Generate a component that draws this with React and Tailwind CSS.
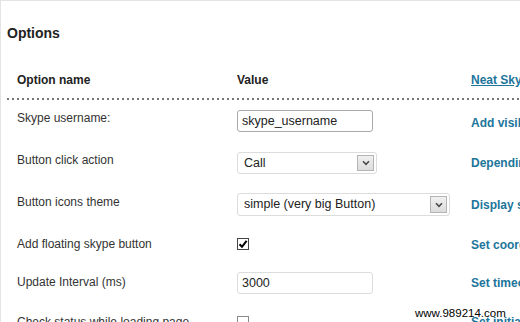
import React from "react";

function Chevron() {
  return (
    <svg width="8" height="6" viewBox="0 0 8 6" className="block">
      <path d="M1 1.2 L4 4.4 L7 1.2" fill="none" stroke="#4a4a4a" strokeWidth="1.6" />
    </svg>
  );
}

function SelectBox({ value, width, height }) {
  return (
    <div
      className={`${width} ${height} relative flex items-center rounded-[3px] border border-[#dcdcdc] bg-white pl-[6px] text-[12.5px] text-[#222]`}
    >
      <span className="whitespace-nowrap">{value}</span>
      <div className="absolute right-[2px] top-[2px] bottom-[2px] flex w-[17px] items-center justify-center border border-[#b4b4b4] bg-[linear-gradient(#f0f0f0,#dcdcdc)]">
        <Chevron />
      </div>
    </div>
  );
}

function TextBox({ value, border }) {
  return (
    <div
      className={`flex h-[22px] w-[136px] items-center rounded-[3px] border ${border} bg-white pl-[4px] text-[12.5px] text-[#222]`}
    >
      {value}
    </div>
  );
}

function Check({ checked }) {
  return (
    <div
      className={`flex h-[12px] w-[12px] items-center justify-center border ${
        checked ? "border-[#444]" : "border-[#8a8a8a]"
      } bg-white`}
    >
      {checked && (
        <svg width="10" height="10" viewBox="0 0 10 10" className="block">
          <path d="M1.5 5.2 L4 7.8 L8.6 1.8" fill="none" stroke="#000" strokeWidth="2" />
        </svg>
      )}
    </div>
  );
}

function Row({ h, label, lpt, control, cpt, desc, dpt }) {
  return (
    <div className={`grid grid-cols-[236px_234px_1fr] ${h}`}>
      <div className={`${lpt} pl-[16px] text-[12px] leading-[16px] whitespace-nowrap`}>{label}</div>
      <div className={cpt}>{control}</div>
      <div
        className={`${dpt} whitespace-nowrap text-[12px] font-bold leading-[16px] text-[#21759b]`}
      >
        {desc}
      </div>
    </div>
  );
}

export default function App() {
  return (
    <div className="relative h-[322px] w-[520px] overflow-hidden border-l border-t border-[#e4e4e4] bg-white font-['Liberation_Sans',Arial,sans-serif] text-[#333]">
      <h2 className="pl-[6px] pt-[23px] text-[14px] font-bold leading-[18px] text-[#222]">Options</h2>

      <div className="grid grid-cols-[236px_234px_1fr] pt-[30px] pb-[10px] text-[12px] font-bold leading-[16px] text-[#222]">
        <div className="pl-[16px]">Option name</div>
        <div>Value</div>
        <div className="whitespace-nowrap text-[#21759b] underline">Neat Skype Status</div>
      </div>

      <div className="ml-[6px] h-[2px] bg-[image:repeating-linear-gradient(90deg,#777777_0px,#777777_2px,transparent_2px,transparent_5px)]" />

      <Row
        h="h-[42px]"
        lpt="pt-[10px]"
        label="Skype username:"
        cpt="pt-[10px]"
        control={<TextBox value="skype_username" border="border-[#a9a9a9]" />}
        dpt="pt-[15px]"
        desc="Add visible skype username"
      />
      <Row
        h="h-[42px]"
        lpt="pt-[10px]"
        label="Button click action"
        cpt="pt-[10px]"
        control={<SelectBox value="Call" width="w-[140px]" height="h-[22px]" />}
        dpt="pt-[13px]"
        desc="Depending on action"
      />
      <Row
        h="h-[42px]"
        lpt="pt-[10px]"
        label="Button icons theme"
        cpt="pt-[9px]"
        control={<SelectBox value="simple (very big Button)" width="w-[213px]" height="h-[23px]" />}
        dpt="pt-[13px]"
        desc="Display skype button"
      />
      <Row
        h="h-[38px]"
        lpt="pt-[10px]"
        label="Add floating skype button"
        cpt="pt-[12px]"
        control={<Check checked />}
        dpt="pt-[11px]"
        desc="Set coordinates"
      />
      <Row
        h="h-[42px]"
        lpt="pt-[10px]"
        label="Update Interval (ms)"
        cpt="pt-[8px]"
        control={<TextBox value="3000" border="border-[#dcdcdc]" />}
        dpt="pt-[11px]"
        desc="Set timeout"
      />
      <Row
        h="h-[40px]"
        lpt="pt-[8px]"
        label="Check status while loading page"
        cpt="pt-[10px]"
        control={<Check checked={false} />}
        dpt="pt-[8px]"
        desc="Set initial status"
      />

      <div className="absolute left-[414px] top-[305px] text-[11.5px] leading-[14px] text-black">
        www.989214.com
      </div>
    </div>
  );
}
